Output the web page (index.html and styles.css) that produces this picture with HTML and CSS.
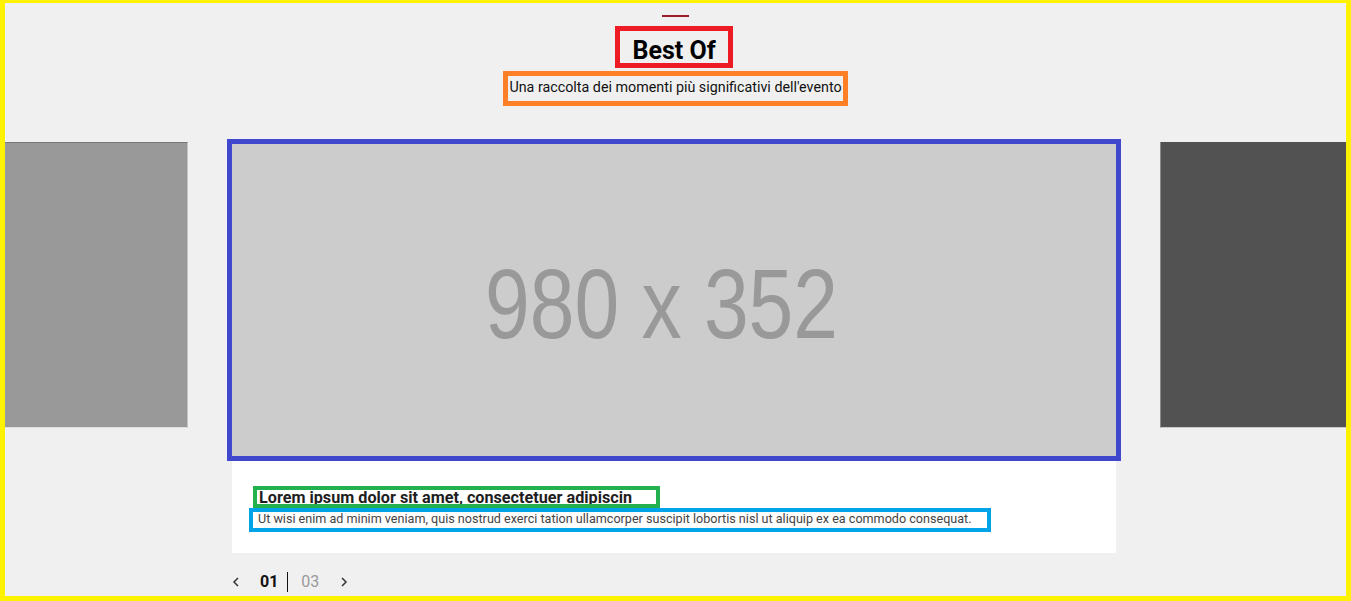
FILE: index.html
```html
<!DOCTYPE html>
<html lang="it">
<head>
<meta charset="utf-8">
<title>Best Of</title>
<link rel="stylesheet" href="styles.css">
</head>
<body>
<div class="frame">
  <header class="header">
    <span class="accent"></span>
    <h2 class="title">Best Of</h2>
    <p class="subtitle">Una raccolta dei momenti più significativi dell'evento</p>
  </header>
  <section class="carousel">
    <div class="slide slide-side slide-left"></div>
    <div class="slide slide-main">
      <div class="placeholder">
        <svg width="884" height="312" viewBox="0 0 884 312">
          <text x="253" y="194" class="ph-text" textLength="353" lengthAdjust="spacingAndGlyphs">980 x 352</text>
        </svg>
      </div>
      <div class="caption">
        <h3 class="cap-title">Lorem ipsum dolor sit amet, consectetuer adipiscin</h3>
        <p class="cap-text">Ut wisi enim ad minim veniam, quis nostrud exerci tation ullamcorper suscipit lobortis nisl ut aliquip ex ea commodo consequat.</p>
      </div>
      <nav class="pager">
        <svg class="chev" width="8" height="10" viewBox="0 0 8 10"><path d="M6 1 L2 5 L6 9" /></svg>
        <span class="num current">01</span>
        <span class="divider"></span>
        <span class="num total">03</span>
        <svg class="chev next" width="8" height="10" viewBox="0 0 8 10"><path d="M2 1 L6 5 L2 9" /></svg>
      </nav>
    </div>
    <div class="slide slide-side slide-right"></div>
  </section>
</div>
</body>
</html>
```
FILE: styles.css
```css
html, body {
  margin: 0;
  padding: 0;
}
body {
  font-family: Roboto, "Liberation Sans", Arial, sans-serif;
  background: #f0f0f0;
}
.frame {
  height: 601px;
  box-sizing: border-box;
  border: 5px solid #fff200;
  border-top-width: 3px;
  background: #f0f0f0;
  overflow: hidden;
}
.header {
  display: flex;
  flex-direction: column;
  align-items: center;
  padding-top: 12px;
}
.accent {
  display: block;
  width: 27px;
  height: 2px;
  background: #9b1b2a;
  margin-left: -1px;
}
.title {
  margin: 14px 0 0;
  padding: 0 12px;
  height: 32px;
  line-height: 40px;
  font-size: 25px;
  font-weight: 700;
  color: #000;
  outline: 5px solid #ed1c24;
  margin-left: -3px;
  overflow: visible;
}
.subtitle {
  margin: 13px 0 0;
  padding: 0 1px;
  height: 25px;
  line-height: 23px;
  font-size: 14.3px;
  color: #111;
  outline: 5px solid #ff7f27;
}
.carousel {
  display: flex;
  justify-content: center;
  gap: 44px;
  margin-top: 41px;
  margin-left: -3px;
}
.slide {
  flex: 0 0 884px;
  width: 884px;
}
.slide-side {
  height: 286px;
  box-sizing: border-box;
}
.slide-left {
  background: #999;
  border-top: 1px solid #777;
  border-right: 1px solid #c4c4c4;
  border-bottom: 1px solid #ddd;
}
.slide-right {
  background: #525252;
  border-left: 1px solid #8a8a8a;
  border-bottom: 1px solid #c8c8c8;
}
.slide-main {
  margin-top: 2px;
}
.placeholder {
  height: 312px;
  background: #cccccc;
  outline: 5px solid #3f48cc;
}
.placeholder svg {
  display: block;
}
.ph-text {
  font-family: "Liberation Sans", Arial, sans-serif;
  font-size: 98px;
  fill: #999;
}
.caption {
  background: #fff;
  padding: 34px 0 25px;
}
.cap-title {
  display: block;
  width: 397px;
  margin: 0 0 8px 25px;
  padding-left: 2px;
  height: 14px;
  line-height: 16px;
  font-size: 16.2px;
  font-weight: 700;
  color: #1e1e1e;
  outline: 4px solid #22b14c;
  white-space: nowrap;
  overflow: visible;
}
.cap-text {
  width: 729px;
  margin: 0 0 0 21px;
  padding-left: 5px;
  height: 16px;
  line-height: 14px;
  font-size: 12.6px;
  color: #444;
  outline: 4px solid #00a2e8;
  white-space: nowrap;
}
.pager {
  display: flex;
  align-items: center;
  height: 21px;
  margin-top: 18px;
}
.chev {
  display: block;
  fill: none;
  stroke: #333;
  stroke-width: 1.5;
}
.num {
  font-size: 16px;
  line-height: 21px;
}
.current {
  font-weight: 700;
  color: #111;
  margin-left: 20px;
}
.divider {
  width: 1px;
  height: 20px;
  background: #111;
  margin-left: 9px;
}
.total {
  color: #999;
  margin-left: 13px;
}
.next {
  margin-left: 21px;
}
```
